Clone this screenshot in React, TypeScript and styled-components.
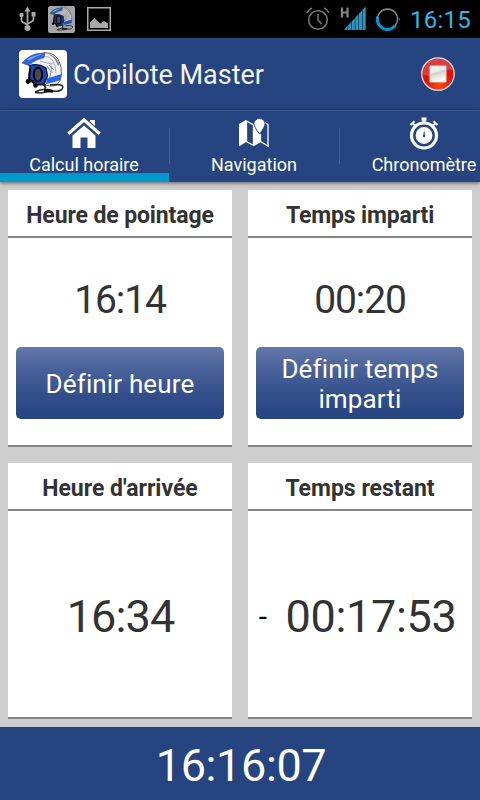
import React from "react";
import styled, { createGlobalStyle } from "styled-components";

const GlobalStyle = createGlobalStyle`
  * { box-sizing: border-box; }
  body { margin: 0; background: #000; font-family: Roboto, "Liberation Sans", sans-serif; }
`;

const Screen = styled.div`
  width: 480px;
  height: 800px;
  display: flex;
  flex-direction: column;
  overflow: hidden;
  background: #cdcdcd;
`;

const StatusBar = styled.div`
  height: 38px;
  flex: none;
  display: flex;
  align-items: center;
  justify-content: space-between;
  background: #000;
  padding: 0 9px 0 18px;
`;

const StatusGroup = styled.div<{ $gap: number }>`
  display: flex;
  align-items: center;
  gap: ${(p) => p.$gap}px;
`;

const StatusClock = styled.span`
  font-size: 24px;
  line-height: 38px;
  color: #33b5e5;
  letter-spacing: 0.25px;
  padding-top: 1px;
`;

const ActionBar = styled.header`
  height: 72px;
  flex: none;
  display: flex;
  align-items: center;
  background: #264480;
  border-top: 1px solid #2f4c88;
  padding: 0 25px 1px 19px;
`;

const AppTitle = styled.h1`
  margin: 0 auto 0 6px;
  padding-top: 1px;
  font-size: 27px;
  font-weight: 400;
  color: #f3f3f3;
  line-height: 32px;
`;

const TabBar = styled.nav`
  height: 72px;
  flex: none;
  display: flex;
  background: #264480;
  border-top: 1px solid #3a568e;
  box-shadow: 0 1px 4px rgba(0, 0, 0, 0.55);
`;

const Tab = styled.div<{ $active?: boolean }>`
  width: 169px;
  flex: none;
  display: flex;
  flex-direction: column;
  align-items: center;
  padding: 4px 1px 0 0;
  box-shadow: ${(p) => (p.$active ? "inset 0 -9px 0 #0099cc" : "none")};
`;

const TabLabel = styled.span`
  font-size: 18px;
  line-height: 22px;
  margin-top: 3px;
  color: #fff;
`;

const TabDivider = styled.div`
  width: 1px;
  height: 36px;
  flex: none;
  margin-top: 17px;
  background: #455f96;
`;

const Grid = styled.main`
  flex: 1;
  display: grid;
  grid-template-columns: 224px 224px;
  grid-template-rows: 257px 256px;
  gap: 16px;
  padding: 8px;
`;

const Card = styled.section`
  display: flex;
  flex-direction: column;
  background: #fff;
  border-bottom: 2px solid #858585;
`;

const CardTitle = styled.h2<{ $spacing?: number }>`
  margin: 0;
  height: 48px;
  flex: none;
  border-bottom: 2px solid #858585;
  font-size: 23px;
  font-weight: 700;
  line-height: 52px;
  text-align: center;
  white-space: nowrap;
  color: #333;
  letter-spacing: ${(p) => p.$spacing ?? 0}px;
`;

const SetTime = styled.div`
  font-size: 39px;
  line-height: 48px;
  margin-top: 38px;
  text-align: center;
  color: #333;
  letter-spacing: -1.1px;
`;

const SetButton = styled.button`
  width: 208px;
  height: 72px;
  margin: 23px 8px 0;
  padding: 2px 20px 0;
  border: 0;
  border-radius: 5px;
  background: linear-gradient(#6478aa, #4a629a 30%, #34508b 65%, #264480);
  color: #fff;
  font-family: inherit;
  font-size: 26px;
  line-height: 30px;
  letter-spacing: 0.15px;
`;

const Result = styled.div<{ $spacing: number }>`
  flex: 1;
  display: flex;
  align-items: center;
  justify-content: center;
  font-size: 45px;
  line-height: 54px;
  color: #333;
  padding: 6px 0 0 1px;
  letter-spacing: ${(p) => p.$spacing}px;
`;

const Sign = styled.span`
  font-size: 30px;
  color: #000;
  margin: 0 19px 0 -6px;
`;

const Footer = styled.footer`
  height: 73px;
  flex: none;
  background: #264480;
  color: #fff;
  font-size: 45px;
  line-height: 77px;
  text-align: center;
  letter-spacing: -0.4px;
  padding-left: 2px;
`;

const Usb = () => (
  <svg width="18" height="26" viewBox="0 0 18 26" fill="none" stroke="#a9a9a9" strokeWidth="1.7">
    <path d="M9.500 4v17M3.500 10v4q0 1.300 1 2l5 3M15.500 10v3q0 1.300-1 2l-5 3" />
    <path d="M9.500 .5l3 5h-6z" fill="#a9a9a9" stroke="none" />
    <circle cx="3.500" cy="9" r="2.200" fill="#a9a9a9" stroke="none" />
    <path d="M13.500 6h4v4.500h-4z" fill="#a9a9a9" stroke="none" />
    <circle cx="9.500" cy="22" r="3" fill="#a9a9a9" stroke="none" />
  </svg>
);

const Helmet = ({ size, dim }: { size: number; dim?: boolean }) => (
  <svg width={size} height={size} viewBox="0 0 48 48">
    <rect width="48" height="48" rx="4" fill={dim ? "#a6a6a6" : "#fff"} />
    <path
      d="M10 14Q17 4 26 2.800 35 2.500 39.500 10 43 17 42.500 24 42 31 38 35q-7 2.500-12 0L12 20z"
      fill={dim ? "#b8b8bc" : "#f1f1f5"}
      stroke="#555"
      strokeWidth=".9"
    />
    <path d="M24 6q7 0 10 5 3 5 3 12M21 11l11 3 3-2M32 14l1 9" fill="none" stroke="#a3a3ab" strokeWidth=".9" />
    <path d="M29 4Q37 5 40.500 14l-1.500 2Q36 7 29 4z" fill="#8e9096" />
    <path d="M3 13Q9 6 16 4l10-1.200-1 5Q17 9 9.500 15.500z" fill={dim ? "#235caa" : "#2b66e0"} stroke="#44506e" strokeWidth=".6" />
    <path d="M8 9.500Q15 4.500 25 4L18 6 10 10.500z" fill="#8aa4d8" />
    <path d="M28 28.500l14.500-4.500-.8 6Q35 32.500 27 34z" fill={dim ? "#2051ba" : "#2767e8"} />
    <path d="M11 15.500Q19 13 27 18l1.500 8-3.500 8.500-9 .5-5-6z" fill={dim ? "#0e3a9c" : "#174bc0"} stroke="#0a1235" strokeWidth="1.300" />
    <path d="M28 16l4 6-1.500 6M30 15l5 5" stroke="#888" fill="none" />
    <ellipse cx="19" cy="24.500" rx="4.200" ry="7" fill="#4b4850" stroke="#050505" strokeWidth="2" />
    <path d="M11.500 18q-2 6-1.500 13M8 32l6-1 2 4" fill="none" stroke="#050505" strokeWidth="1.800" />
    <circle cx="9" cy="31.500" r="2.400" fill="#080808" />
    <circle cx="16.500" cy="35.500" r="2.300" fill="#080808" />
    <path d="M23 33l4 5M26 34v5M16 42q8-4 15-2 7 2.500 11 0 3-2.500 1-4.500-4-1.500-12-.5M16 42.500l6 .5 7-1.500" fill="none" stroke="#222" strokeWidth="1.500" />
    <path d="M25 40.500l9 .8" stroke="#111" strokeWidth="2.800" />
  </svg>
);

const Picture = () => (
  <svg width="24" height="24" viewBox="0 0 24 24">
    <rect x=".75" y=".75" width="22.500" height="22.500" fill="none" stroke="#a9a9a9" strokeWidth="1.500" />
    <path d="M3 21v-5.500l4.500-4.500 4.500 4.500 1.500 1 3.500-2.500 4 2.500v4.500z" fill="#a9a9a9" />
  </svg>
);

const Alarm = () => (
  <svg width="24" height="24" viewBox="0 0 24 24" fill="none" stroke="#757575" strokeWidth="1.600">
    <circle cx="12" cy="13" r="9.300" />
    <path d="M12 7v6l3.500 4M1 6q1.500-3.500 5-5M23 6q-1.500-3.500-5-5" />
  </svg>
);

const signalBars = [0, 1, 2, 3, 4, 5];

const Signal = () => (
  <svg width="27" height="30" viewBox="0 0 27 30">
    <path d="M2 3.500v10M7.500 3.500v10M2 8.500h6" stroke="#858585" strokeWidth="2.200" />
    {signalBars.map((i) => (
      <path key={i} d={`M${4.5 + i * 3.6} 26v${-1 - i * 3.8}l3.200-3.400v${4.4 + i * 3.8}z`} fill="#2d93be" />
    ))}
  </svg>
);

const BatteryRing = () => (
  <svg width="24" height="24" viewBox="0 0 24 24" fill="none">
    <circle cx="11.500" cy="12" r="10" stroke="#8a8a8a" strokeWidth="1.400" />
    <path d="M1.800 9.500a10 10 0 0 0 17.500 9" stroke="#0099cc" strokeWidth="3" />
    <path d="M23.400 11v2.500" stroke="#0c6f92" strokeWidth="1.200" />
  </svg>
);

const StopIcon = () => (
  <svg width="34" height="34" viewBox="0 0 34 34">
    <defs>
      <radialGradient id="stopRed" cx="55%" cy="85%" r="75%">
        <stop offset="0" stopColor="#ff4a08" />
        <stop offset=".6" stopColor="#de1008" />
        <stop offset="1" stopColor="#cf1c1c" />
      </radialGradient>
      <linearGradient id="stopSquare" x1="0" y1="0" x2=".3" y2="1">
        <stop offset="0" stopColor="#fff" />
        <stop offset=".45" stopColor="#e6e6e2" />
        <stop offset=".5" stopColor="#cfcfca" />
        <stop offset="1" stopColor="#fff" />
      </linearGradient>
    </defs>
    <circle cx="17" cy="17" r="16.200" fill="url(#stopRed)" stroke="#dfe1e6" strokeWidth="1.300" />
    <path d="M2 17A15 15 0 0 1 31.500 13Q23 12 16 17 8 21 2 17z" fill="#fff" opacity=".17" />
    <path d="M9 9h16v16H9z" fill="url(#stopSquare)" stroke="#e3d9d2" />
  </svg>
);

const HouseIcon = () => (
  <svg width="36" height="36" viewBox="0 0 36 36" fill="#fff">
    <path d="M18 10.500l11.500 10V33h-8V22.500h-7V33h-8V20.500z" />
    <path d="M2.300 19.800L18 5.800 33.700 19.800" fill="none" stroke="#264480" strokeWidth="5" />
    <path d="M24 5h5v6l-5-4.500z" />
    <path d="M2.300 18.800L18 5 33.700 18.800" fill="none" stroke="#fff" strokeWidth="3.200" />
  </svg>
);

const MapIcon = () => (
  <svg width="36" height="36" viewBox="0 0 36 36">
    <path d="M3 9l7-4v22l-7 4.500z" fill="#fff" />
    <path d="M10.500 6l7 4v20.500l-7-4zM17.500 30.500l7-4 7.500 4.500V9.500l-3.500-2M24.500 19v8" fill="none" stroke="#fff" strokeWidth="1.300" />
    <path d="M17.500 10l2-1q1 6 5 10v8l-7 3.500z" fill="#fff" />
    <path d="M23.500 19q-5.500-7-5.500-10.500a5.500 5 0 0 1 11 0Q29 12 23.500 19z" fill="#fff" stroke="#264480" strokeWidth=".9" />
  </svg>
);

const StopwatchIcon = () => (
  <svg width="36" height="36" viewBox="0 0 36 36">
    <path d="M15.500 2.500h5v3h-1v3h-3v-3h-1z" fill="#fff" />
    <path d="M4.500 10l4-3.700M31.500 10l-4-3.700M6 7.500l4 4M30 7.500l-4 4" stroke="#fff" strokeWidth="2" />
    <circle cx="18" cy="20.500" r="12.500" fill="none" stroke="#fff" strokeWidth="3.200" />
    <circle cx="18" cy="20.500" r="8.400" fill="#fff" />
    <path d="M18.300 15l.7 5.500a1.200 1.200 0 1 1-1.900 0z" fill="#264480" />
  </svg>
);

const tabs = [
  { label: "Calcul horaire", icon: <HouseIcon />, active: true },
  { label: "Navigation", icon: <MapIcon /> },
  { label: "Chronomètre", icon: <StopwatchIcon /> },
];

export default function App() {
  return (
    <>
      <GlobalStyle />
      <Screen>
        <StatusBar>
          <StatusGroup $gap={12}>
            <Usb />
            <Helmet size={27} dim />
            <Picture />
          </StatusGroup>
          <StatusGroup $gap={9.5}>
            <Alarm />
            <Signal />
            <BatteryRing />
            <StatusClock>16:15</StatusClock>
          </StatusGroup>
        </StatusBar>
        <ActionBar>
          <Helmet size={48} />
          <AppTitle>Copilote Master</AppTitle>
          <StopIcon />
        </ActionBar>
        <TabBar>
          {tabs.map((tab, i) => (
            <React.Fragment key={tab.label}>
              {i > 0 && <TabDivider />}
              <Tab $active={tab.active}>
                {tab.icon}
                <TabLabel>{tab.label}</TabLabel>
              </Tab>
            </React.Fragment>
          ))}
        </TabBar>
        <Grid>
          <Card>
            <CardTitle $spacing={-0.12}>Heure de pointage</CardTitle>
            <SetTime>16:14</SetTime>
            <SetButton>Définir heure</SetButton>
          </Card>
          <Card>
            <CardTitle $spacing={-0.15}>Temps imparti</CardTitle>
            <SetTime>00:20</SetTime>
            <SetButton>Définir temps imparti</SetButton>
          </Card>
          <Card>
            <CardTitle>Heure d'arrivée</CardTitle>
            <Result $spacing={-0.9}>16:34</Result>
          </Card>
          <Card>
            <CardTitle>Temps restant</CardTitle>
            <Result $spacing={-0.35}>
              <Sign>-</Sign>00:17:53
            </Result>
          </Card>
        </Grid>
        <Footer>16:16:07</Footer>
      </Screen>
    </>
  );
}
